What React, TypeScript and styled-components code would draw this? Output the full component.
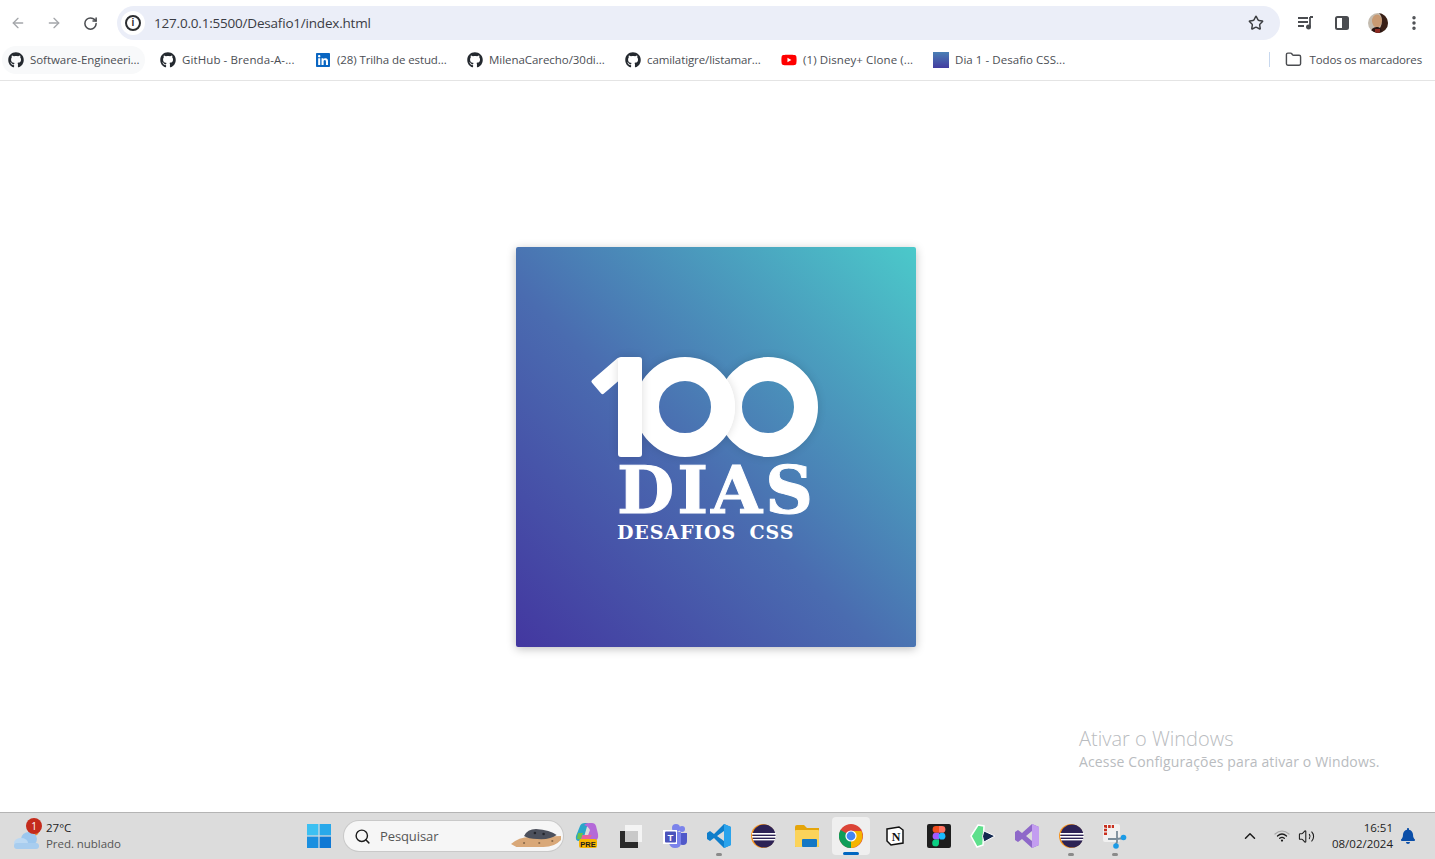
import React from 'react';
import styled, { createGlobalStyle } from 'styled-components';
import { ArrowLeft, ArrowRight, RotateCw, Star, Folder, EllipsisVertical, Search, ChevronUp, Volume2 } from 'lucide-react';
import { FaGithub, FaLinkedin, FaYoutube, FaBell } from 'react-icons/fa';

const GlobalStyle = createGlobalStyle`
  html, body { margin: 0; padding: 0; height: 100%; overflow: hidden; background: #fff; }
  body { font-family: "Open Sans", "Noto Sans", sans-serif; }
  #root { height: 100%; }
`;

const Screen = styled.div`
  width: 1435px;
  height: 859px;
  display: flex;
  flex-direction: column;
  position: relative;
  overflow: hidden;
`;

const Toolbar = styled.div`
  height: 40px;
  display: flex;
  align-items: center;
  padding: 6px 0 0 6px;
  box-sizing: border-box;
`;

const NavButton = styled.div<{ $dim?: boolean }>`
  width: 24px;
  height: 24px;
  margin-right: 12px;
  display: flex;
  align-items: center;
  justify-content: center;
  color: ${p => (p.$dim ? '#a4a6aa' : '#4a4c50')};
`;

const Omnibox = styled.div`
  width: 1163px;
  height: 34px;
  margin-left: 3px;
  border-radius: 17px;
  background: #ebeef8;
  display: flex;
  align-items: center;
  padding: 0 16px 0 4px;
  box-sizing: border-box;
`;

const InfoBadge = styled.div`
  width: 24px;
  height: 24px;
  border-radius: 50%;
  background: #fff;
  display: flex;
  align-items: center;
  justify-content: center;
`;

const InfoDot = styled.div`
  width: 12px;
  height: 12px;
  border: 2px solid #2b2d30;
  border-radius: 50%;
  color: #2b2d30;
  font: 700 10px/12px "Liberation Sans", sans-serif;
  text-align: center;
`;

const Url = styled.span`
  flex: 1;
  margin-left: 9px;
  font-size: 13.5px;
  letter-spacing: -0.2px;
  color: #3a3c44;
`;

const ToolIcons = styled.div`
  display: flex;
  align-items: center;
  margin-left: 8px;
`;

const ToolIcon = styled.div`
  width: 36px;
  height: 24px;
  display: flex;
  align-items: center;
  justify-content: center;
  color: #4a4c50;
`;

const Bookmarks = styled.div`
  height: 41px;
  display: flex;
  align-items: center;
  padding: 0 13px 1px 2px;
  box-sizing: border-box;
  border-bottom: 1px solid #e4e4e4;
`;

const Bookmark = styled.div<{ $hover?: boolean; $width: number; $after?: number; $tracking: number }>`
  width: ${p => p.$width}px;
  height: 28px;
  flex: none;
  margin-right: ${p => p.$after ?? 0}px;
  display: flex;
  align-items: center;
  gap: 6px;
  padding-left: 6px;
  box-sizing: border-box;
  border-radius: 14px;
  background: ${p => (p.$hover ? '#f8f9fa' : 'transparent')};
  font-size: 11.5px;
  letter-spacing: ${p => p.$tracking}px;
  color: #4b4e54;
  white-space: nowrap;
`;

const BookmarkThumb = styled.div`
  width: 16px;
  height: 16px;
  background: linear-gradient(#4a7fb5, #433ca0);
`;

const Separator = styled.div`
  width: 1px;
  height: 15px;
  margin-left: auto;
  margin-right: 15px;
  background: #c8d8ee;
`;

const AllBookmarks = styled.div`
  display: flex;
  align-items: center;
  gap: 8px;
  font-size: 11.5px;
  letter-spacing: -0.15px;
  color: #4b4e54;
  svg { color: #4a4c50; }
`;

const Page = styled.main`
  flex: 1;
  display: flex;
  align-items: center;
  justify-content: center;
  padding-right: 3px;
`;

const Card = styled.div`
  width: 400px;
  height: 400px;
  position: relative;
  background: linear-gradient(to top right, #4337a0 0%, #4a6cb0 45%, #4bc9ca 100%);
  border-radius: 2px;
  box-shadow: 0 2px 10px rgba(0, 0, 0, 0.25);
`;

const Flag = styled.div`
  position: absolute;
  left: 76px;
  top: 120px;
  width: 37px;
  height: 18px;
  border-radius: 2px;
  background: #fff;
  transform: rotate(-41deg);
`;

const Stem = styled.div`
  position: absolute;
  left: 102px;
  top: 110px;
  width: 24px;
  height: 100px;
  border-radius: 3px;
  background: #fff;
  box-shadow: 0 0 10px rgba(0, 0, 0, 0.14);
`;

const Ring = styled.div<{ $left: number }>`
  position: absolute;
  left: ${p => p.$left}px;
  top: 110px;
  width: 100px;
  height: 100px;
  box-sizing: border-box;
  border: 24px solid #fff;
  border-radius: 50%;
  box-shadow: 0 0 10px rgba(0, 0, 0, 0.14);
`;

const BigWord = styled.div`
  position: absolute;
  left: 101px;
  top: 219px;
  font: 700 66px/48px "DejaVu Serif", serif;
  letter-spacing: 3px;
  -webkit-text-stroke: 1px #fff;
  color: #fff;
  white-space: nowrap;
`;

const SmallWord = styled.div`
  position: absolute;
  left: 101px;
  top: 276px;
  font: 700 19px/18px "DejaVu Serif", serif;
  letter-spacing: 0.87px;
  word-spacing: 6px;
  color: #fff;
  white-space: pre;
`;

const Watermark = styled.div`
  position: absolute;
  left: 1079px;
  top: 727px;
  color: #b9bcc0;
  font-size: 14px;
  letter-spacing: 0.14px;
  line-height: 18px;
`;

const WatermarkTitle = styled.div`
  font-size: 20px;
  font-weight: 300;
  letter-spacing: 0;
  line-height: 24px;
  margin-bottom: 2px;
`;

const Taskbar = styled.footer`
  height: 47px;
  display: flex;
  align-items: center;
  background: #dcdcdc;
  border-top: 1px solid #b4b4b4;
  box-sizing: border-box;
`;

const Weather = styled.div`
  width: 307px;
  flex: none;
  display: flex;
  align-items: center;
  padding-left: 13px;
  gap: 6px;
  box-sizing: border-box;
`;

const WeatherIcon = styled.div`
  width: 27px;
  height: 32px;
  position: relative;
  flex: none;
`;

const Badge = styled.div`
  position: absolute;
  left: 13px;
  top: -2px;
  width: 16px;
  height: 16px;
  border-radius: 50%;
  background: #c42b1c;
  color: #fff;
  font-size: 10px;
  line-height: 16px;
  text-align: center;
`;

const WeatherText = styled.div`
  font-size: 11.5px;
  line-height: 16px;
  color: #1c1c1c;
`;

const MutedLine = styled.div`
  color: #555;
  letter-spacing: -0.05px;
`;

const SearchBox = styled.div`
  width: 219px;
  height: 30px;
  margin-left: 13px;
  flex: none;
  position: relative;
  display: flex;
  align-items: center;
  gap: 9px;
  padding-left: 10px;
  box-sizing: border-box;
  border-radius: 15px;
  background: #f6f6f6;
  box-shadow: 0 0 0 1px #c9c9c9;
  font-size: 13px;
  letter-spacing: -0.1px;
  color: #555;
`;

const SearchArt = styled.svg`
  position: absolute;
  right: 2px;
  top: 6px;
`;

const Apps = styled.div`
  display: flex;
  align-items: center;
  margin-left: 5px;
`;

const AppSlot = styled.div<{ $active?: boolean }>`
  width: 38px;
  height: 38px;
  margin-right: 6px;
  position: relative;
  display: flex;
  align-items: center;
  justify-content: center;
  border-radius: 4px;
  background: ${p => (p.$active ? '#efefef' : 'transparent')};
`;

const RunDot = styled.div<{ $active?: boolean }>`
  position: absolute;
  left: 50%;
  bottom: ${p => (p.$active ? '0' : '-1px')};
  transform: translateX(-50%);
  width: ${p => (p.$active ? '16px' : '6px')};
  height: 3px;
  border-radius: 2px;
  background: ${p => (p.$active ? '#0067c0' : '#8a8a8a')};
`;

const Tray = styled.div`
  margin-left: auto;
  display: flex;
  align-items: center;
  color: #1c1c1c;
  padding-right: 19px;
`;

const TrayIcon = styled.div<{ $width: number }>`
  width: ${p => p.$width}px;
  display: flex;
  justify-content: center;
`;

const Clock = styled.div`
  margin: 0 7px 0 16px;
  text-align: right;
  font-size: 11.5px;
  line-height: 16px;
  color: #1c1c1c;
`;

const github = <FaGithub size={16} color="#24292f" />;

const bookmarks = [
  { label: 'Software-Engineeri...', icon: github, width: 143, after: 9, tracking: -0.05, hover: true },
  { label: 'GitHub - Brenda-A-...', icon: github, width: 155, tracking: 0.1 },
  { label: '(28) Trilha de estud...', icon: <FaLinkedin size={16} color="#0a66c2" />, width: 152, tracking: -0.1 },
  { label: 'MilenaCarecho/30di...', icon: github, width: 158, tracking: -0.05 },
  { label: 'camilatigre/listamar...', icon: github, width: 156, tracking: -0.1 },
  { label: '(1) Disney+ Clone (...', icon: <FaYoutube size={16} color="#f00" />, width: 152, tracking: 0.1 },
  { label: 'Dia 1 - Desafio CSS...', icon: <BookmarkThumb />, width: 150, tracking: 0.05 },
];

const EclipseIcon = () => (
  <svg width="26" height="26" viewBox="0 0 26 26">
    <circle cx="13" cy="13" r="12" fill="#f7941e" />
    <circle cx="14" cy="13" r="11.5" fill="#2c2255" />
    <rect x="2" y="10" width="24" height="1.6" fill="#fff" />
    <rect x="2" y="13" width="24" height="1.6" fill="#fff" />
    <rect x="3" y="16" width="22" height="1.4" fill="#fff" />
  </svg>
);

const appIcons: { key: string; icon: React.ReactNode; dot?: boolean; active?: boolean }[] = [
  {
    key: 'copilot',
    icon: (
      <svg width="26" height="28" viewBox="0 0 26 28">
        <path d="M2 14 L6 4 Q7 1 11 1 H14 L10 15 Q9 19 5 19 Q1 19 2 14Z" fill="#2aa5c9" />
        <path d="M10 3 Q12 1 15 1 H18 Q21 1 22 4 L24 12 Q25 18 20 19 H12 L16 8 Q14 4 10 3Z" fill="#b469d8" />
        <path d="M8 13 H18 L14 19 H6Z" fill="#e9619b" />
        <path d="M4 11 L9 11 L7 17 H3Z" fill="#6cc24a" />
        <rect x="5" y="17" width="18" height="9" rx="2" fill="#f7b500" />
        <text x="14" y="24.5" textAnchor="middle" fontSize="7.5" fontWeight="700" fontFamily="Liberation Sans" fill="#1c1c1c">PRE</text>
      </svg>
    ),
  },
  {
    key: 'store',
    icon: (
      <svg width="24" height="24" viewBox="0 0 24 24">
        <rect x="6" y="1" width="17" height="17" fill="#f4f4f4" />
        <rect x="1" y="7" width="18" height="17" fill="#2a2a2a" />
        <rect x="6" y="7" width="13" height="11" fill="#c9c9c9" />
      </svg>
    ),
  },
  {
    key: 'teams',
    icon: (
      <svg width="26" height="26" viewBox="0 0 26 26">
        <circle cx="20" cy="6" r="3" fill="#7b83eb" />
        <circle cx="14" cy="5" r="4" fill="#7b83eb" />
        <path d="M17 10 H25 V18 Q25 22 21 22 Q17 22 17 18Z" fill="#5059c9" />
        <path d="M7 9 H19 V20 Q19 25 13 25 Q8 25 7 20Z" fill="#7b83eb" />
        <rect x="1" y="7" width="14" height="14" fill="#fff" />
        <rect x="3" y="8.5" width="11" height="11" rx="1" fill="#4b53bc" />
        <text x="8.5" y="17.5" textAnchor="middle" fontSize="9.5" fontWeight="700" fontFamily="Liberation Sans" fill="#fff">T</text>
      </svg>
    ),
  },
  {
    key: 'vscode',
    dot: true,
    icon: (
      <svg width="26" height="26" viewBox="0 0 26 26">
        <path d="M18 1 L25 4 V22 L18 25 L8 15 L4 18 L1 16 V10 L4 8 L8 11Z M18 8 L11 13 L18 18Z" fill="#0f7ecb" fillRule="evenodd" />
        <path d="M18 1 L25 4 V22 L18 25Z" fill="#2aa3ec" />
      </svg>
    ),
  },
  { key: 'eclipse1', icon: <EclipseIcon /> },
  {
    key: 'files',
    icon: (
      <svg width="26" height="24" viewBox="0 0 26 24">
        <path d="M1 3 Q1 1 3 1 H10 L13 4 H25 V22 Q25 23 24 23 H2 Q1 23 1 22Z" fill="#e5a50a" />
        <rect x="1" y="6" width="24" height="17" rx="1" fill="#fbd35a" />
        <rect x="8" y="15" width="15" height="8" rx="1" fill="#1477c4" />
      </svg>
    ),
  },
  {
    key: 'chrome',
    active: true,
    dot: true,
    icon: (
      <svg width="24" height="24" viewBox="0 0 24 24">
        <circle cx="12" cy="12" r="12" fill="#db4437" />
        <path d="M12 12 L1.6 6 A12 12 0 0 0 12 24 L18 14Z" fill="#0f9d58" />
        <path d="M12 7 H22.4 A12 12 0 0 1 12 24Z" fill="#f4b400" />
        <circle cx="12" cy="12" r="5.6" fill="#fff" />
        <circle cx="12" cy="12" r="4.4" fill="#4285f4" />
      </svg>
    ),
  },
  {
    key: 'notion',
    icon: (
      <svg width="20" height="20" viewBox="0 0 20 20">
        <path d="M2 3 L14 1 L18 4 V17 L6 19 L2 15Z" fill="#fff" stroke="#111" strokeWidth="1.5" />
        <text x="11" y="15" textAnchor="middle" fontSize="12" fontWeight="700" fontFamily="Liberation Serif" fill="#111">N</text>
      </svg>
    ),
  },
  {
    key: 'figma',
    icon: (
      <svg width="24" height="24" viewBox="0 0 24 24">
        <rect width="24" height="24" rx="2" fill="#1e1e1e" />
        <path d="M12 2 H9 A3.4 3.4 0 0 0 9 8.8 H12Z" fill="#f24e1e" />
        <path d="M12 2 H15 A3.4 3.4 0 0 1 15 8.8 H12Z" fill="#ff7262" />
        <path d="M12 8.8 H9 A3.4 3.4 0 0 0 9 15.6 H12Z" fill="#a259ff" />
        <circle cx="15" cy="12.2" r="3.4" fill="#1abcfe" />
        <path d="M9 15.6 H12 V19 A3.4 3.4 0 1 1 9 15.6Z" fill="#0acf83" />
      </svg>
    ),
  },
  {
    key: 'kotlin',
    icon: (
      <svg width="26" height="26" viewBox="0 0 26 26">
        <path d="M8 2 L14 3 L13 22 L7 24 L1 13Z" fill="#5ee08c" stroke="#fff" strokeWidth="1.5" />
        <path d="M14 8 L25 13 L14 19 Q11 13 14 8Z" fill="#12284f" stroke="#fff" strokeWidth="1" />
      </svg>
    ),
  },
  {
    key: 'vs',
    icon: (
      <svg width="26" height="26" viewBox="0 0 26 26">
        <path d="M18 1 L25 4 V22 L18 25 L8 16 L4 19 L1 17 V9 L4 7 L8 10Z M18 8 L12 13 L18 18Z" fill="#8e68c9" fillRule="evenodd" />
        <path d="M18 1 L25 4 V22 L18 25Z" fill="#c39df0" />
      </svg>
    ),
  },
  { key: 'eclipse2', icon: <EclipseIcon />, dot: true },
  {
    key: 'snip',
    dot: true,
    icon: (
      <svg width="26" height="26" viewBox="0 0 26 26">
        <rect x="1" y="1" width="17" height="18" rx="2" fill="#f1f1f1" />
        <path d="M3.5 12 V3.5 H12" fill="none" stroke="#c8301e" strokeWidth="3" strokeDasharray="2.6 1.1" />
        <path d="M15 8 L15 19 L13 23 M22 15 L15 16 L6 16" stroke="#7a8c99" strokeWidth="1.8" fill="none" />
        <circle cx="21.5" cy="14.5" r="2.8" fill="#1c9be6" />
        <circle cx="14" cy="23" r="2.8" fill="#1c9be6" />
      </svg>
    ),
  },
];

const App: React.FC = () => (
  <Screen>
    <GlobalStyle />
    <Toolbar>
      <NavButton $dim><ArrowLeft size={16} /></NavButton>
      <NavButton $dim><ArrowRight size={16} /></NavButton>
      <NavButton><RotateCw size={15} strokeWidth={2.4} /></NavButton>
      <Omnibox>
        <InfoBadge><InfoDot>i</InfoDot></InfoBadge>
        <Url>127.0.0.1:5500/Desafio1/index.html</Url>
        <Star size={16} strokeWidth={2.2} color="#3c3e42" />
      </Omnibox>
      <ToolIcons>
        <ToolIcon>
          <svg width="16" height="14" viewBox="0 0 16 14" fill="none" stroke="#4a4c50" strokeWidth="1.8">
            <path d="M0 2 H10 M0 6 H10 M0 10 H6" />
            <path d="M12 1 H15 M12 1 V11" />
            <circle cx="10.5" cy="11" r="1.6" fill="#4a4c50" />
          </svg>
        </ToolIcon>
        <ToolIcon>
          <svg width="14" height="14" viewBox="0 0 14 14">
            <rect x="1" y="1" width="12" height="12" rx="1.5" fill="none" stroke="#4a4c50" strokeWidth="2" />
            <rect x="7" y="1" width="6" height="12" fill="#4a4c50" />
          </svg>
        </ToolIcon>
        <ToolIcon>
          <svg width="20" height="20" viewBox="0 0 20 20">
            <defs>
              <clipPath id="avatar-clip"><circle cx="10" cy="10" r="10" /></clipPath>
            </defs>
            <g clipPath="url(#avatar-clip)">
              <rect width="20" height="20" fill="#c4bcb0" />
              <ellipse cx="9" cy="8" rx="5" ry="6.5" fill="#c99a72" />
              <path d="M11 0 H20 V20 H8 Q14 14 14 8 Q14 3 11 0Z" fill="#3a2016" />
              <path d="M2 20 Q4 13 10 14 Q14 15 14 20Z" fill="#2a1512" />
              <rect x="7" y="16" width="5" height="4" fill="#8c2a22" />
            </g>
          </svg>
        </ToolIcon>
        <ToolIcon><EllipsisVertical size={18} strokeWidth={2.6} /></ToolIcon>
      </ToolIcons>
    </Toolbar>
    <Bookmarks>
      {bookmarks.map(({ label, icon, width, after, tracking, hover }) => (
        <Bookmark key={label} $hover={hover} $width={width} $after={after} $tracking={tracking}>
          {icon}
          {label}
        </Bookmark>
      ))}
      <Separator />
      <AllBookmarks><Folder size={17} />Todos os marcadores</AllBookmarks>
    </Bookmarks>
    <Page>
      <Card>
        <Ring $left={202} />
        <Ring $left={119} />
        <Flag />
        <Stem />
        <BigWord>DIAS</BigWord>
        <SmallWord>DESAFIOS CSS</SmallWord>
      </Card>
    </Page>
    <Watermark>
      <WatermarkTitle>Ativar o Windows</WatermarkTitle>
      Acesse Configurações para ativar o Windows.
    </Watermark>
    <Taskbar>
      <Weather>
        <WeatherIcon>
          <svg width="27" height="32" viewBox="0 0 27 32">
            <circle cx="21" cy="11" r="5" fill="#e8893a" />
            <ellipse cx="16" cy="19" rx="8" ry="7" fill="#9cc7ee" />
            <ellipse cx="8" cy="23" rx="7" ry="5" fill="#bcd9f3" />
            <rect x="1" y="23" width="25" height="6" rx="3" fill="#a8cdef" />
          </svg>
          <Badge>1</Badge>
        </WeatherIcon>
        <WeatherText>
          27°C
          <MutedLine>Pred. nublado</MutedLine>
        </WeatherText>
      </Weather>
      <svg width="24" height="24" viewBox="0 0 24 24">
        <rect x="0" y="0" width="11.4" height="11.4" fill="#3cc0f2" />
        <rect x="12.6" y="0" width="11.4" height="11.4" fill="#28a8ea" />
        <rect x="0" y="12.6" width="11.4" height="11.4" fill="#1a8fe0" />
        <rect x="12.6" y="12.6" width="11.4" height="11.4" fill="#0f78d4" />
      </svg>
      <SearchBox>
        <Search size={17} color="#1c1c1c" strokeWidth={2} />
        Pesquisar
        <SearchArt width="50" height="20" viewBox="0 0 46 20" preserveAspectRatio="none">
          <path d="M0 17 Q8 9 20 10 L46 9 V13 Q40 20 30 20 H5Z" fill="#d9a878" />
          <path d="M12 9 Q15 2 23 2 Q36 3 42 8 Q36 13 24 12 Q16 12 12 9Z" fill="#4c505c" />
          <circle cx="22" cy="6" r="1.2" fill="#23252c" />
          <circle cx="30" cy="7" r="1.2" fill="#23252c" />
          <circle cx="12" cy="16" r="1" fill="#8a6a4a" />
          <circle cx="26" cy="16" r="1" fill="#8a6a4a" />
          <circle cx="38" cy="14" r="1" fill="#8a6a4a" />
        </SearchArt>
      </SearchBox>
      <Apps>
        {appIcons.map(({ key, icon, dot, active }) => (
          <AppSlot key={key} $active={active}>
            {icon}
            {dot && <RunDot $active={active} />}
          </AppSlot>
        ))}
      </Apps>
      <Tray>
        <TrayIcon $width={32}><ChevronUp size={18} /></TrayIcon>
        <TrayIcon $width={32}>
          <svg width="16" height="14" viewBox="0 0 16 14" fill="none" strokeLinecap="round">
            <path d="M1 5 Q8 -1 15 5" stroke="#a8a8a8" strokeWidth="1.2" />
            <path d="M3.5 7 Q8 3 12.5 7" stroke="#1c1c1c" strokeWidth="1.3" />
            <path d="M5.7 9.3 Q8 7.5 10.3 9.3" stroke="#1c1c1c" strokeWidth="1.3" />
            <circle cx="8" cy="11.6" r="1.1" fill="#1c1c1c" />
          </svg>
        </TrayIcon>
        <TrayIcon $width={18}><Volume2 size={17} strokeWidth={1.5} /></TrayIcon>
        <Clock>
          16:51
          <div>08/02/2024</div>
        </Clock>
        <FaBell size={16} color="#0a4ea8" />
      </Tray>
    </Taskbar>
  </Screen>
);

export default App;
